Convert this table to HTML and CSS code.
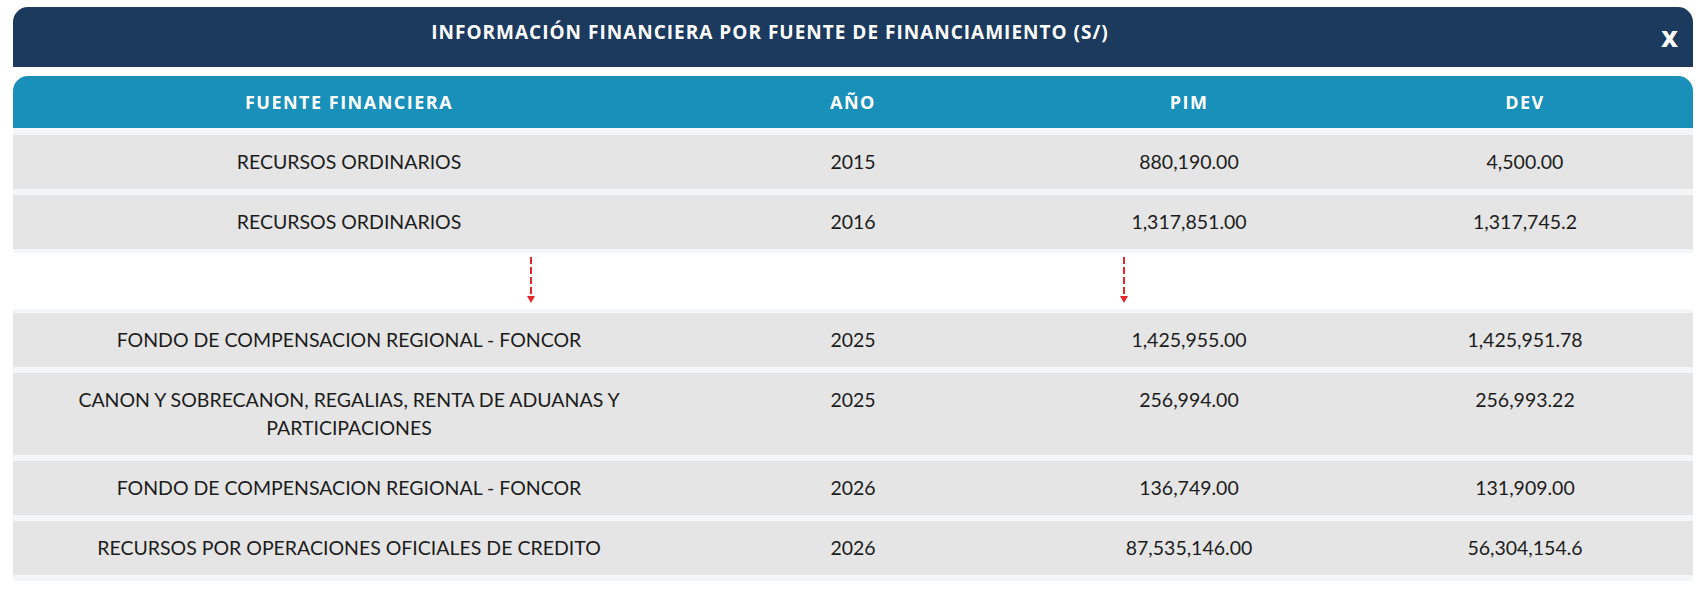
FILE: index.html
```html
<!DOCTYPE html>
<html lang="es">
<head>
<meta charset="utf-8">
<title>Información financiera</title>
<link rel="stylesheet" href="styles.css">
</head>
<body>
<div class="modal">
  <div class="modal-header">
    <h1 class="modal-title">INFORMACIÓN FINANCIERA POR FUENTE DE FINANCIAMIENTO (S/)</h1>
    <span class="close">X</span>
  </div>
  <div class="table">
    <div class="thead">
      <div class="th">FUENTE FINANCIERA</div>
      <div class="th">AÑO</div>
      <div class="th">PIM</div>
      <div class="th">DEV</div>
    </div>
    <div class="tbody">
      <div class="tr">
        <div class="td">RECURSOS ORDINARIOS</div>
        <div class="td">2015</div>
        <div class="td">880,190.00</div>
        <div class="td">4,500.00</div>
      </div>
      <div class="tr">
        <div class="td">RECURSOS ORDINARIOS</div>
        <div class="td">2016</div>
        <div class="td">1,317,851.00</div>
        <div class="td">1,317,745.2</div>
      </div>
      <div class="spacer">
        <svg class="arrow arrow-a" width="10" height="46" viewBox="0 0 10 46"><line x1="5" y1="0" x2="5" y2="39" stroke="#e3262c" stroke-width="2" stroke-dasharray="7 3"/><polygon points="1,39 9,39 5,46" fill="#e3262c"/></svg>
        <svg class="arrow arrow-b" width="10" height="46" viewBox="0 0 10 46"><line x1="5" y1="0" x2="5" y2="39" stroke="#e3262c" stroke-width="2" stroke-dasharray="7 3"/><polygon points="1,39 9,39 5,46" fill="#e3262c"/></svg>
      </div>
      <div class="tr">
        <div class="td">FONDO DE COMPENSACION REGIONAL - FONCOR</div>
        <div class="td">2025</div>
        <div class="td">1,425,955.00</div>
        <div class="td">1,425,951.78</div>
      </div>
      <div class="tr">
        <div class="td">CANON Y SOBRECANON, REGALIAS, RENTA DE ADUANAS Y PARTICIPACIONES</div>
        <div class="td">2025</div>
        <div class="td">256,994.00</div>
        <div class="td">256,993.22</div>
      </div>
      <div class="tr">
        <div class="td">FONDO DE COMPENSACION REGIONAL - FONCOR</div>
        <div class="td">2026</div>
        <div class="td">136,749.00</div>
        <div class="td">131,909.00</div>
      </div>
      <div class="tr">
        <div class="td">RECURSOS POR OPERACIONES OFICIALES DE CREDITO</div>
        <div class="td">2026</div>
        <div class="td">87,535,146.00</div>
        <div class="td">56,304,154.6</div>
      </div>
    </div>
  </div>
</div>
</body>
</html>
```

FILE: styles.css
```css
html, body {
  margin: 0;
  padding: 0;
  background: #ffffff;
}

.modal {
  margin: 7px 7px 0 13px;
  display: flex;
  flex-direction: column;
  gap: 9px;
}

.modal-header {
  position: relative;
  height: 60px;
  background: #1b3a5d;
  border-radius: 15px 15px 0 0;
  display: flex;
  justify-content: center;
  align-items: flex-start;
  padding-top: 14px;
  box-sizing: border-box;
}

.modal-title {
  margin: 0;
  font-family: "Open Sans", "Liberation Sans", sans-serif;
  font-weight: 700;
  font-size: 19px;
  line-height: 22px;
  color: #ffffff;
  letter-spacing: 1px;
  transform: translateX(-83px);
}

.close {
  position: absolute;
  right: 15px;
  top: 18px;
  font-family: "Open Sans", "Liberation Sans", sans-serif;
  font-weight: 800;
  font-size: 23px;
  line-height: 26px;
  color: #ffffff;
}

.table {
  display: flex;
  flex-direction: column;
}

.thead {
  display: grid;
  grid-template-columns: 40% 20% 20% 20%;
  height: 52px;
  align-items: center;
  background: #1890b9;
  border-radius: 15px 15px 0 0;
}

.th {
  text-align: center;
  font-family: "Open Sans", "Liberation Sans", sans-serif;
  font-weight: 700;
  font-size: 18px;
  letter-spacing: 1.5px;
  color: #ffffff;
}

.tbody {
  display: flex;
  flex-direction: column;
  gap: 6px;
  padding: 7px 0 6px;
  background: #f4f5f6;
}

.tr {
  display: grid;
  grid-template-columns: 40% 20% 20% 20%;
  background: #e5e5e5;
  padding: 13px 0;
}

.td {
  text-align: center;
  font-family: Lato, "Liberation Sans", sans-serif;
  font-size: 19.5px;
  line-height: 28px;
  color: #1c1c1c;
}

.tr .td:first-child {
  padding: 0 50px;
}

.spacer {
  position: relative;
  height: 56px;
  margin: -2px 0;
  background: #ffffff;
}

.arrow {
  position: absolute;
  top: 4px;
}

.arrow-a {
  left: 513px;
}

.arrow-b {
  left: 1106px;
}
```
